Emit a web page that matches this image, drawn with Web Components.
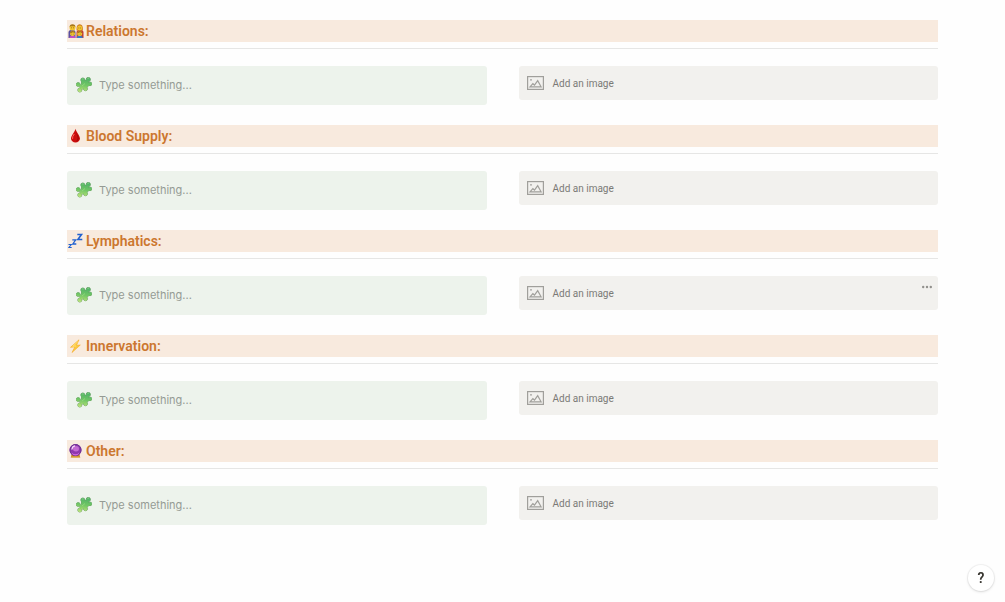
<!DOCTYPE html>
<html lang="en">
<head>
<meta charset="utf-8">
<meta name="viewport" content="width=device-width, initial-scale=1">
<title>Notes</title>
<style>
    body {
        margin: 0;
        background: #fefefe;
        font-family: Roboto, "Liberation Sans", sans-serif;
    }
</style>
</head>
<body>
<notes-page>
    <note-section icon="family" heading="Relations:"></note-section>
    <note-section icon="drop" heading="Blood Supply:"></note-section>
    <note-section icon="sleep" heading="Lymphatics:" menu></note-section>
    <note-section icon="bolt" heading="Innervation:"></note-section>
    <note-section icon="crystal" heading="Other:"></note-section>
    <help-button slot="help"></help-button>
</notes-page>

<script>
// outline of the puzzle piece: a tilted body with round knobs
const puzzleShape = `
    <path d="M5.500 4.500 11.500 3 13.500 8 10.500 10.500 5 12.500 3.500 8.500 5.500 7.500z"/>
    <circle cx="6.800" cy="3" r="2"/>
    <circle cx="12.300" cy="2.500" r="2.100"/>
    <circle cx="14" cy="6.900" r="1.800"/>
    <circle cx="2.200" cy="7.500" r="1.900"/>
    <circle cx="3.800" cy="13" r="2"/>
    <circle cx="9.500" cy="11.700" r="2"/>`;

const icons = {
    family: `
        <path d="M.5 15V9.500Q.5 7 3 7h2q2.500 0 2.500 2.500V15z" fill="#5a4f9e"/>
        <path d="M8.500 15V9.500Q8.500 7 11 7h2q2.500 0 2.500 2.500V15z" fill="#c23b32"/>
        <circle cx="4.500" cy="4.700" r="2.900" fill="#f3c52f"/>
        <path d="M1.600 4.500Q1.400 1.200 4.500 1.200t2.900 3.300L6.500 3.200h-4z" fill="#a8781c"/>
        <path d="M8.600 7.500Q8 1.200 11.700 1.200t3.100 6.300z" fill="#cf7d1c"/>
        <circle cx="11.700" cy="5" r="2.500" fill="#f3c52f"/>
        <path d="M1.500 15q0-2.500 3-2.500t3 2.500z" fill="#c24fc4"/>
        <path d="M8.700 15q0-2.500 3-2.500t3 2.500z" fill="#3a78c4"/>
        <circle cx="4.500" cy="10.600" r="2.500" fill="#f5cb35"/>
        <circle cx="11.700" cy="10.600" r="2.500" fill="#f5cb35"/>
        <path d="M2 10.500Q2 7.900 4.500 7.900T7 10.500L5 9.300zM9.200 10.500Q9.200 7.900 11.700 7.900t2.500 2.600l-2-1.200z" fill="#a8701c"/>
        <path d="M3.500 4.300v1M5.500 4.300v1M10.800 4.500v1M12.600 4.500v1M3.700 10.700v.8M5.400 10.700v.8M11 10.700v.8M12.600 10.700v.8" stroke="#7a5018" stroke-width=".6"/>`,
    drop: `
        <path d="M7.500 .8C6.800 4.300 3 7.700 3 10.500A4.500 4 0 0 0 12 10.500C12 7.700 8.200 4.300 7.500 .8z" fill="#cc0d0d"/>
        <path d="M8 3.500c.5 2.800 3.200 4.500 2.800 7.300-.3 2-1.700 2.600-3.300 2.700 4.300-2.500.5-7 .5-10z" fill="#a00808"/>
        <path d="M6 6.300Q4.200 8.600 4.500 10.500" fill="none" stroke="#ff6b60" stroke-width="1" stroke-linecap="round"/>`,
    sleep: `
        <g fill="none" stroke="#2261cf" stroke-linejoin="miter">
            <path d="M.5 11.500h2.800L.9 14.500h2.800" stroke-width="1.100"/>
            <path d="M4.300 6.800h3.400L4.800 11h3.500" stroke-width="1.300"/>
            <path d="M9.300 1.500h4.200L9.900 6.500h4.400" stroke-width="1.600"/>
        </g>`,
    bolt: `
        <path d="M11 1.800 2.500 9.300l4.300-.4L4 14.500 12.300 7 8.500 7.300z" fill="#fbc93c" stroke="#f5ab27" stroke-width=".6"/>
        <path d="M9.800 3.700 4.700 8.400l3.500-.5" fill="none" stroke="#ffe78b" stroke-width=".7"/>`,
    crystal: `
        <path d="M4 10.500h7l1.300 4H2.700z" fill="#b57720"/>
        <path d="M3.200 14h8.600" stroke="#eab949" stroke-width="1"/>
        <circle cx="7.500" cy="7" r="6" fill="#8e38ae"/>
        <circle cx="7.500" cy="7" r="5.500" fill="none" stroke="#6d3290" stroke-width="1"/>
        <path d="M3.500 9.500q4 3.700 8 0-1 3-4 3t-4-3z" fill="#d56be0"/>
        <ellipse cx="8" cy="5.700" rx="3" ry="2.700" fill="#c36bd3"/>
        <path d="M4 6q.2-2.500 2.500-3" fill="none" stroke="#f7d9fa" stroke-width="1.300" stroke-linecap="round"/>`,
    puzzle: `
        <defs>
            <linearGradient id="leaf" gradientUnits="userSpaceOnUse" x1="9" y1="1" x2="7" y2="15">
                <stop offset="0" stop-color="#4fb368"/>
                <stop offset=".5" stop-color="#70c664"/>
                <stop offset="1" stop-color="#b9e277"/>
            </linearGradient>
        </defs>
        <g fill="none" stroke="#62985c" stroke-width=".9">${puzzleShape}</g>
        <g fill="url(#leaf)">${puzzleShape}</g>
        <path d="M6 2.200q.8-.5 1.500 0M11.500 1.500q.8-.4 1.500 0M6 9l3-2.500" fill="none" stroke="#a5dd8c" stroke-width=".6"/>`
};

class PictureIcon extends HTMLElement {
    constructor() {
        super();
        this.attachShadow({ mode: 'open' });
    }

    connectedCallback() {
        this.shadowRoot.innerHTML = `
            <style>
                :host { display: block; flex: none; width: 16px; height: 16px; }
                svg { display: block; width: 100%; height: 100%; }
            </style>
            <svg viewBox="0 0 16 16" aria-hidden="true">${icons[this.getAttribute('name')]}</svg>
        `;
    }
}

class SectionHeading extends HTMLElement {
    constructor() {
        super();
        this.attachShadow({ mode: 'open' });
        this.shadowRoot.innerHTML = `
            <style>
                :host { display: block; padding-bottom: 6px; border-bottom: 1px solid #e6e6e5; }
                h2 {
                    display: flex;
                    align-items: center;
                    gap: 2px;
                    margin: 0;
                    padding-left: 1px;
                    background: #f8eade;
                    color: #cc772f;
                    font-size: 14px;
                    font-weight: 600;
                    line-height: 22px;
                }
            </style>
            <h2><slot name="icon"></slot><slot></slot></h2>
        `;
    }
}

class TextCallout extends HTMLElement {
    constructor() {
        super();
        this.attachShadow({ mode: 'open' });
        this.shadowRoot.innerHTML = `
            <style>
                :host { display: block; background: #edf3ec; border-radius: 3px; }
                label { display: flex; align-items: center; gap: 7px; padding: 9px 9px 10px; }
                input {
                    flex: 1;
                    min-width: 0;
                    height: 20px;
                    padding: 0;
                    border: 0;
                    outline: 0;
                    background: none;
                    color: #37352f;
                    font-family: Inter, "Liberation Sans", sans-serif;
                    font-size: 11px;
                }
                input::placeholder { color: #959b94; opacity: 1; }
            </style>
            <label>
                <picture-icon name="puzzle"></picture-icon>
                <input type="text" placeholder="Type something..." aria-label="Callout text">
            </label>
        `;
    }
}

class ImageBlock extends HTMLElement {
    constructor() {
        super();
        this.attachShadow({ mode: 'open' });
    }

    connectedCallback() {
        const menu = this.hasAttribute('menu') ? `
            <button class="menu" type="button" aria-label="More options">
                <svg width="10" height="4" viewBox="0 0 10 4" fill="#92918d">
                    <circle cx="1.200" cy="2" r="1.200"/><circle cx="5" cy="2" r="1.200"/><circle cx="8.800" cy="2" r="1.200"/>
                </svg>
            </button>` : '';

        this.shadowRoot.innerHTML = `
            <style>
                :host { display: flex; align-items: flex-start; background: #f2f1ee; border-radius: 3px; }
                button { border: 0; background: none; font-family: inherit; cursor: pointer; }
                .add {
                    flex: 1;
                    display: flex;
                    align-items: center;
                    gap: 9px;
                    height: 34px;
                    padding: 0 8px;
                    color: #7b7a76;
                    font-size: 10px;
                    text-align: left;
                }
                .menu { display: flex; padding: 9px 6px; }
            </style>
            <button class="add" type="button">
                <svg width="17" height="14" viewBox="0 0 17 14" fill="none" stroke="#a09f9b" aria-hidden="true">
                    <rect x=".6" y=".6" width="15.800" height="12.800" stroke-width="1.200"/>
                    <path d="M3 10.800 5.900 7.700l1.600 1.500 3.200-4.600 3.400 6.200z" stroke-width="1.200"/>
                    <circle cx="4" cy="3.800" r=".9" fill="#a09f9b" stroke="none"/>
                </svg>
                Add an image
            </button>
            ${menu}
        `;
    }
}

class NoteSection extends HTMLElement {
    constructor() {
        super();
        this.attachShadow({ mode: 'open' });
    }

    connectedCallback() {
        this.shadowRoot.innerHTML = `
            <style>
                :host { display: block; }
                .columns {
                    display: grid;
                    grid-template-columns: 1fr 1fr;
                    align-items: start;
                    gap: 32px;
                    margin-top: 17px;
                }
            </style>
            <section-heading>
                <picture-icon slot="icon" name="${this.getAttribute('icon')}"></picture-icon>
                ${this.getAttribute('heading')}
            </section-heading>
            <div class="columns">
                <text-callout></text-callout>
                <image-block ${this.hasAttribute('menu') ? 'menu' : ''}></image-block>
            </div>
        `;
    }
}

class HelpButton extends HTMLElement {
    constructor() {
        super();
        this.attachShadow({ mode: 'open' });
        this.shadowRoot.innerHTML = `
            <style>
                /* floats over the page */
                :host { display: block; position: fixed; right: 11px; bottom: 11px; }
                button {
                    width: 26px;
                    height: 26px;
                    padding: 0;
                    border: 0;
                    border-radius: 50%;
                    background: #fff;
                    box-shadow: 0 0 1px 1px rgba(15, 15, 15, 0.05), 0 1px 3px rgba(15, 15, 15, 0.12);
                    color: #37352f;
                    font-family: inherit;
                    font-size: 14px;
                    font-weight: 600;
                    cursor: pointer;
                }
            </style>
            <button type="button">?</button>
        `;
    }
}

class NotesPage extends HTMLElement {
    constructor() {
        super();
        this.attachShadow({ mode: 'open' });
        this.shadowRoot.innerHTML = `
            <style>
                :host { display: block; padding: 20px 67px; }
                main { display: flex; flex-direction: column; gap: 20px; }
            </style>
            <main><slot></slot></main>
            <slot name="help"></slot>
        `;
    }
}

window.customElements.define('picture-icon', PictureIcon);
window.customElements.define('section-heading', SectionHeading);
window.customElements.define('text-callout', TextCallout);
window.customElements.define('image-block', ImageBlock);
window.customElements.define('note-section', NoteSection);
window.customElements.define('help-button', HelpButton);
window.customElements.define('notes-page', NotesPage);
</script>
</body>
</html>
